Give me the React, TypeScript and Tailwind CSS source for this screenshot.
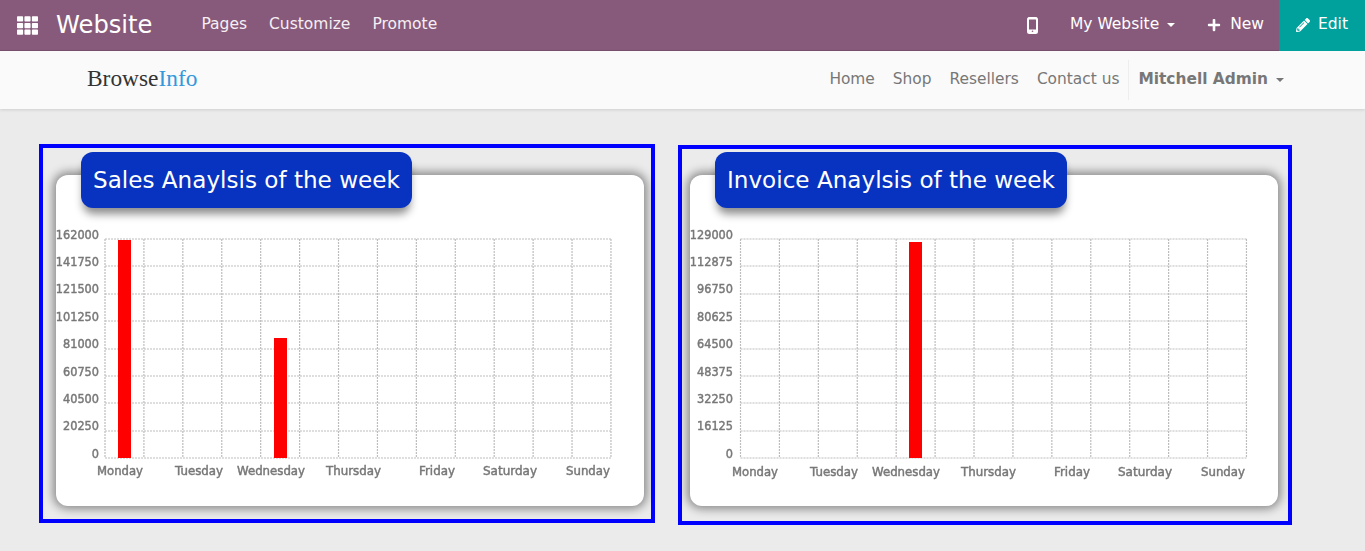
import React from 'react';
import { FaTh, FaPlus, FaPencilAlt } from 'react-icons/fa';

const days = [
  { label: 'Monday', x: 64, width: 46 },
  { label: 'Tuesday', x: 143, width: 48 },
  { label: 'Wednesday', x: 215, width: 68 },
  { label: 'Thursday', x: 297.5, width: 55 },
  { label: 'Friday', x: 381, width: 36 },
  { label: 'Saturday', x: 454, width: 54 },
  { label: 'Sunday', x: 532, width: 44 },
];

const rowY = [64, 91, 119, 146, 174, 201, 228, 256, 283];

const Caret = () => (
  <span className="inline-block w-0 h-0 border-x-[4px] border-x-transparent border-t-[4px] border-t-current ml-2 align-middle"></span>
);

const PhoneIcon = () => (
  <svg width="11" height="17" viewBox="0 0 11 17" className="mr-[32px]">
    <rect x="1" y="1" width="9" height="15" rx="1.5" fill="none" stroke="white" strokeWidth="2" />
    <rect x="1" y="12.5" width="9" height="3.5" fill="white" />
    <rect x="1" y="0.5" width="9" height="2" fill="white" />
    <circle cx="5.5" cy="14.3" r="0.8" fill="#875a7b" />
  </svg>
);

type ChartProps = {
  ticks: number[];
  bars: { x: number; top: number }[];
  labelY: number;
  gridX: number;
  labelDx: number;
};

const Chart: React.FC<ChartProps> = ({ ticks, bars, labelY, gridX, labelDx }) => (
  <svg width="588" height="331" className="block">
    {rowY.map((y) => (
      <line key={y} x1={gridX} x2={gridX + 506} y1={y} y2={y} stroke="#bdbdbd" strokeWidth="1.2" strokeDasharray="2 1" />
    ))}
    {Array.from({ length: 14 }, (_, i) => gridX + i * 38.92).map((x) => (
      <line key={x} x1={x} x2={x} y1="64" y2="283" stroke="#bdbdbd" strokeWidth="1.2" strokeDasharray="2 1" />
    ))}
    {bars.map((bar) => (
      <rect key={bar.x} x={bar.x} y={bar.top} width="13" height={283 - bar.top} fill="#ff0000" />
    ))}
    <g fill="#777777" stroke="#777777" strokeWidth="0.45" fontSize="12" className="blur-[0.35px]" style={{ fontFamily: '"DejaVu Sans", sans-serif' }}>
      {ticks.map((tick, i) => (
        <text key={tick} x="43" y={63.5 + i * 27.4} textAnchor="end" textLength={String(tick).length * 7.2} lengthAdjust="spacingAndGlyphs">
          {tick}
        </text>
      ))}
      {days.map((day) => (
        <text key={day.label} x={day.x + labelDx} y={labelY} textAnchor="middle" textLength={day.width} lengthAdjust="spacingAndGlyphs">
          {day.label}
        </text>
      ))}
    </g>
  </svg>
);

const Panel: React.FC<{ title: string; frameClass: string; children: React.ReactNode }> = ({ title, frameClass, children }) => (
  <div className={`border-[4px] border-[#0000ff] shrink-0 ${frameClass}`}>
    <div className="relative z-10 ml-[25px] h-[56px] bg-[#0733c0] rounded-xl flex items-center px-3 text-white text-[23.1px] shadow-[0_8px_9px_-2px_rgba(0,0,0,0.45)] w-fit">
      {title}
    </div>
    <div className="-mt-[33px] h-[331px] bg-white rounded-xl shadow-[0_0_10px_3px_rgba(0,0,0,0.42)] overflow-hidden">
      {children}
    </div>
  </div>
);

export default function App() {
  return (
    <div className="h-[551px] overflow-hidden bg-[#ebebeb] text-[15.5px]" style={{ fontFamily: '"DejaVu Sans", sans-serif' }}>
      <header className="h-[51px] bg-[#875a7b] border-b border-[#7a5170] flex items-center text-white">
        <FaTh size={21} className="ml-[17px]" />
        <span className="ml-[18px] text-[24.2px]">Website</span>
        <nav className="ml-[49px] flex gap-[22px] text-[#f5eff3]">
          <a href="#">Pages</a>
          <a href="#">Customize</a>
          <a href="#">Promote</a>
        </nav>
        <div className="ml-auto flex items-center h-full">
          <PhoneIcon />
          <span>My Website<Caret /></span>
          <span className="ml-[32px] flex items-center gap-[9px]"><FaPlus size={14} />New</span>
          <span className="ml-[15px] h-[51px] w-[86px] bg-[#00a09d] flex items-center justify-center gap-2"><FaPencilAlt size={14} />Edit</span>
        </div>
      </header>

      <div className="h-[58px] bg-[#fafafa] shadow-[0_1px_3px_rgba(0,0,0,0.12)] flex items-center text-[#777777] text-[15.4px]">
        <span className="ml-[87px] -mt-[2px] text-[23.4px] text-[#333333]" style={{ fontFamily: '"Liberation Serif", serif' }}>
          Browse<span className="text-[#3498db]">Info</span>
        </span>
        <nav className="ml-auto flex gap-[18px]">
          <a href="#">Home</a>
          <a href="#">Shop</a>
          <a href="#">Resellers</a>
          <a href="#">Contact us</a>
        </nav>
        <div className="ml-[9px] mr-[81px] pl-[9px] h-[40px] border-l border-[#eeeeee] flex items-center font-bold">
          <span>Mitchell Admin<Caret /></span>
        </div>
      </div>

      <main className="flex gap-[23px] pl-[39px] pt-[35px]">
        <Panel title="Sales Anaylsis of the week" frameClass="w-[616px] h-[379px] pt-[4px] pl-[13px] pr-[7px]">
          <Chart
            ticks={[162000, 141750, 121500, 101250, 81000, 60750, 40500, 20250, 0]}
            bars={[{ x: 62, top: 65 }, { x: 218, top: 163 }]}
            labelY={300}
            gridX={49}
            labelDx={0}
          />
        </Panel>
        <Panel title="Invoice Anaylsis of the week" frameClass="w-[614px] h-[380px] mt-px pt-[3px] pl-[8px] pr-[10px]">
          <Chart
            ticks={[129000, 112875, 96750, 80625, 64500, 48375, 32250, 16125, 0]}
            bars={[{ x: 219, top: 67 }]}
            labelY={301}
            gridX={50.5}
            labelDx={1}
          />
        </Panel>
      </main>
    </div>
  );
}
